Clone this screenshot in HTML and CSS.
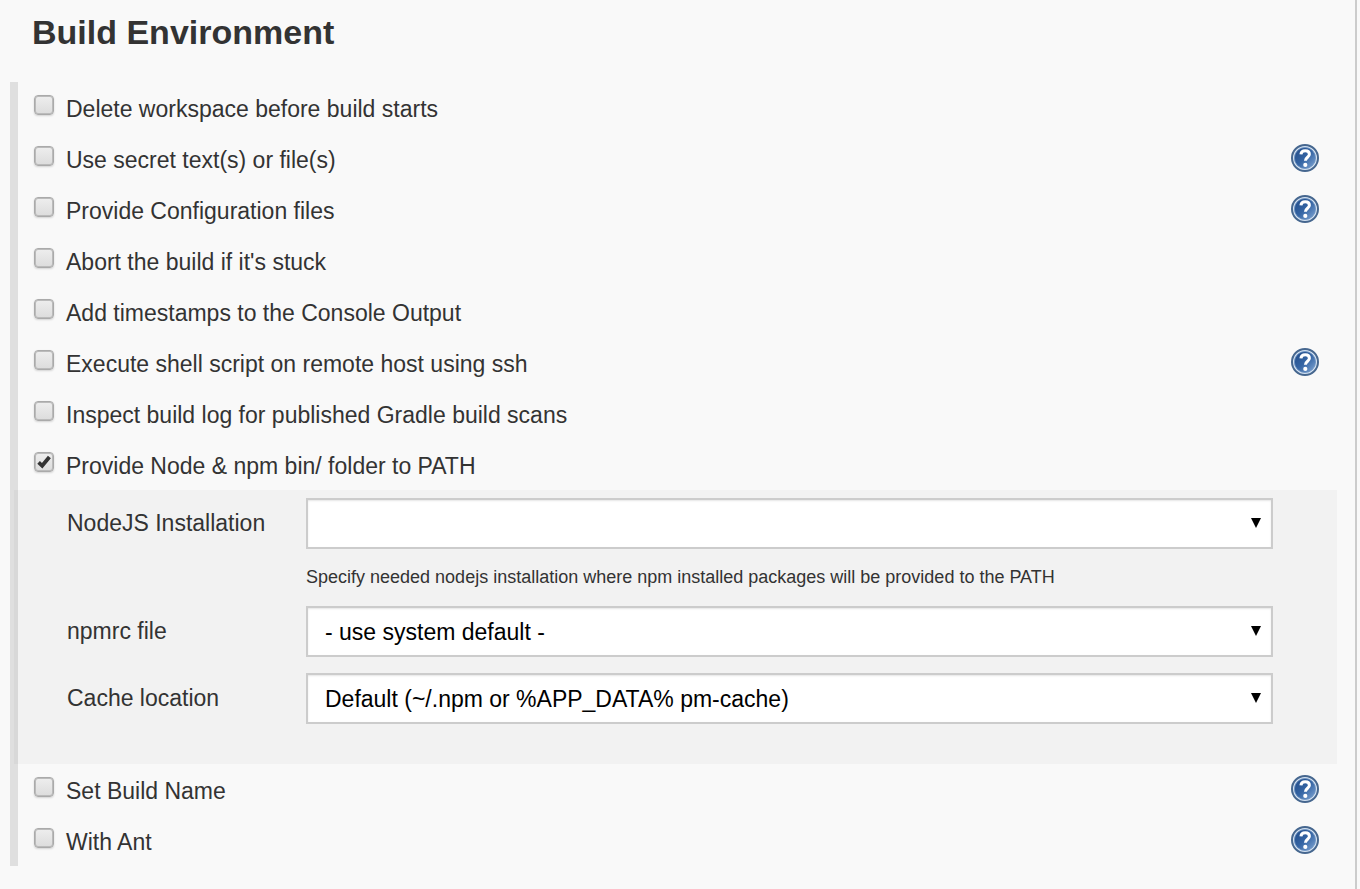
FILE: index.html
```html
<!DOCTYPE html>
<html lang="en">
  <head>
    <meta charset="UTF-8">
    <meta name="viewport" content="width=device-width, initial-scale=1.0">
    <title>Build Environment</title>
    <link rel="stylesheet" href="styles.css">
  </head>
  <body>
    <!-- Shared help icon -->
    <svg class="defs" width="0" height="0" aria-hidden="true">
      <defs>
        <linearGradient id="help-fill" x1="0" y1="0" x2="1" y2="1">
          <stop offset="0" stop-color="#204a87"/>
          <stop offset="0.5" stop-color="#3565a4"/>
          <stop offset="1" stop-color="#83a8d6"/>
        </linearGradient>
        <symbol id="help-icon" viewBox="0 0 28 28">
          <circle cx="14" cy="14" r="13" fill="#d5e3f3" stroke="#46678f" stroke-width="2"/>
          <circle cx="14" cy="14" r="10.6" fill="url(#help-fill)" stroke="#6d93c2" stroke-width="0.8"/>
          <path d="M9.9 10.4C10.2 7.8 12 6.8 14.2 6.8C16.9 6.8 18.4 8.3 18.4 10.3C18.4 13.3 14.4 13.2 14.4 16.8" fill="none" stroke="#fff" stroke-width="3"/>
          <circle cx="14.3" cy="20.9" r="2.1" fill="#fff"/>
        </symbol>
      </defs>
    </svg>

    <form class="config-section">
      <h1 class="section-title">Build Environment</h1>

      <div class="option-list">
        <div class="option">
          <input type="checkbox" id="delete-workspace">
          <label for="delete-workspace">Delete workspace before build starts</label>
        </div>
        <div class="option">
          <input type="checkbox" id="secret-text">
          <label for="secret-text">Use secret text(s) or file(s)</label>
          <button type="button" class="help" aria-label="Help for secret text"><svg><use href="#help-icon"/></svg></button>
        </div>
        <div class="option">
          <input type="checkbox" id="config-files">
          <label for="config-files">Provide Configuration files</label>
          <button type="button" class="help" aria-label="Help for configuration files"><svg><use href="#help-icon"/></svg></button>
        </div>
        <div class="option">
          <input type="checkbox" id="abort-stuck">
          <label for="abort-stuck">Abort the build if it's stuck</label>
        </div>
        <div class="option">
          <input type="checkbox" id="timestamps">
          <label for="timestamps">Add timestamps to the Console Output</label>
        </div>
        <div class="option">
          <input type="checkbox" id="remote-shell">
          <label for="remote-shell">Execute shell script on remote host using ssh</label>
          <button type="button" class="help" aria-label="Help for remote shell script"><svg><use href="#help-icon"/></svg></button>
        </div>
        <div class="option">
          <input type="checkbox" id="gradle-scans">
          <label for="gradle-scans">Inspect build log for published Gradle build scans</label>
        </div>
        <div class="option">
          <input type="checkbox" id="node-path" checked>
          <label for="node-path">Provide Node &amp; npm bin/ folder to PATH</label>
        </div>

        <!-- Settings of the NodeJS option -->
        <div class="option-settings">
          <label for="node-install">NodeJS Installation</label>
          <select id="node-install">
            <option></option>
          </select>
          <p class="hint">Specify needed nodejs installation where npm installed packages will be provided to the PATH</p>

          <label for="npmrc">npmrc file</label>
          <select id="npmrc">
            <option>- use system default -</option>
          </select>

          <label for="cache">Cache location</label>
          <select id="cache">
            <option>Default (~/.npm or %APP_DATA% pm-cache)</option>
          </select>
        </div>

        <div class="option">
          <input type="checkbox" id="build-name">
          <label for="build-name">Set Build Name</label>
          <button type="button" class="help" aria-label="Help for build name"><svg><use href="#help-icon"/></svg></button>
        </div>
        <div class="option">
          <input type="checkbox" id="with-ant">
          <label for="with-ant">With Ant</label>
          <button type="button" class="help" aria-label="Help for Ant"><svg><use href="#help-icon"/></svg></button>
        </div>
      </div>
    </form>
  </body>
</html>
```
FILE: styles.css
```css
* {
  box-sizing: border-box;
}

body {
  margin: 0;
  background: #f9f9f9;
  color: #333;
  font-family: "Liberation Sans", Arial, sans-serif;
  font-size: 23px;
  line-height: 27px;
}

.defs {
  display: block;
}

.config-section {
  min-height: 100vh;
  margin-right: 3px;
  padding: 12px 18px 16px 10px;
  border-right: 2px solid #ccc;
}

.section-title {
  margin: 0 0 30px;
  padding-left: 22px;
  font-size: 34px;
  line-height: 40px;
}

/* Options */
.option-list {
  border-left: 8px solid rgba(0, 0, 0, 0.1);
}

.option {
  display: flex;
  align-items: flex-start;
  gap: 12px;
  min-height: 51px;
  padding: 11px 18px 7px 16px;
}

.option label {
  line-height: 33px;
}

.option input {
  appearance: none;
  flex: none;
  width: 20px;
  height: 20px;
  margin: 2px 0 0;
  border: 1px solid #aaa;
  border-radius: 4px;
  background: linear-gradient(#eee, #dcdcdc);
  box-shadow: inset 0 0 0 1px #bbb, 0 1px 2px rgba(0, 0, 0, 0.15);
}

.option input:checked {
  background:
    url("data:image/svg+xml,%3Csvg xmlns='http://www.w3.org/2000/svg' viewBox='0 0 18 18'%3E%3Cpath d='M3.6 9.4L7.2 12.8L14.4 4' fill='none' stroke='%23333' stroke-width='3.8'/%3E%3C/svg%3E") center / 100% no-repeat,
    linear-gradient(#eee, #dcdcdc);
}

.help {
  width: 28px;
  height: 28px;
  margin-left: auto;
  padding: 0;
  border: none;
  background: none;
  cursor: pointer;
}

.help svg {
  display: block;
  width: 28px;
  height: 28px;
}

/* Settings panel, reaches under half of the side bar */
.option-settings {
  display: grid;
  grid-template-columns: 239px 1fr;
  row-gap: 16px;
  margin-left: -4px;
  padding: 8px 64px 40px 53px;
  background: rgba(0, 0, 0, 0.027);
}

.option-settings label {
  padding-top: 12px;
}

.option-settings select {
  appearance: none;
  width: 100%;
  height: 51px;
  padding: 2px 32px 0 17px;
  border: 2px solid #ccc;
  border-radius: 0;
  background: #fff url("data:image/svg+xml,%3Csvg xmlns='http://www.w3.org/2000/svg' width='10' height='10'%3E%3Cpath d='M0 0H10L5 10Z'/%3E%3C/svg%3E") right 10px top 18px no-repeat;
  box-shadow: inset 0 1px 2px rgba(0, 0, 0, 0.1);
  color: #000;
  font: inherit;
}

.hint {
  grid-column: 2;
  margin: 0;
  font-size: 18px;
  line-height: 25px;
}
```
